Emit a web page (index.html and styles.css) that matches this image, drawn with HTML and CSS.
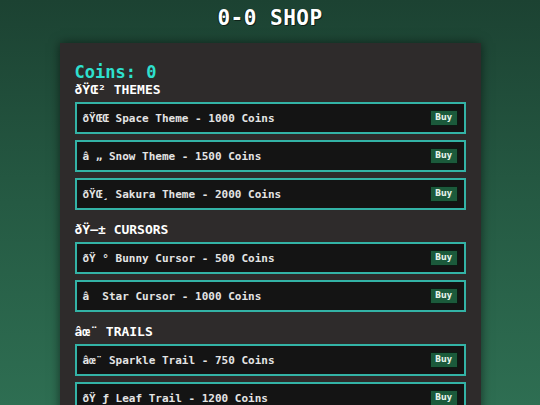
FILE: index.html
```html
<!DOCTYPE html>
<html>
<head>
<meta charset="utf-8">
<link rel="stylesheet" href="styles.css">
</head>
<body>
<h1 class="title">0-0 SHOP</h1>
<div class="panel">
  <div class="coins">Coins: 0</div>
  <h2 class="section">ðŸŒ² THEMES</h2>
  <div class="item"><span class="label">ðŸŒŒ Space Theme - 1000 Coins</span><button class="buy">Buy</button></div>
  <div class="item"><span class="label">â „ Snow Theme - 1500 Coins</span><button class="buy">Buy</button></div>
  <div class="item"><span class="label">ðŸŒ¸ Sakura Theme - 2000 Coins</span><button class="buy">Buy</button></div>
  <h2 class="section">ðŸ–± CURSORS</h2>
  <div class="item"><span class="label">ðŸ ° Bunny Cursor - 500 Coins</span><button class="buy">Buy</button></div>
  <div class="item"><span class="label">â  Star Cursor - 1000 Coins</span><button class="buy">Buy</button></div>
  <h2 class="section">âœ¨ TRAILS</h2>
  <div class="item"><span class="label">âœ¨ Sparkle Trail - 750 Coins</span><button class="buy">Buy</button></div>
  <div class="item"><span class="label">ðŸ ƒ Leaf Trail - 1200 Coins</span><button class="buy">Buy</button></div>
</div>
</body>
</html>
```
FILE: styles.css
```css
html, body {
  margin: 0;
  padding: 0;
  height: 100%;
  overflow: hidden;
}
body {
  background: linear-gradient(180deg, #1c4232 0%, #255a43 50%, #2e6e52 100%);
  font-family: "DejaVu Sans Mono", "Liberation Mono", monospace;
  color: #e6e6e6;
}
.title {
  margin: 0;
  padding-top: 6px;
  height: 37px;
  box-sizing: border-box;
  text-align: center;
  font-size: 21px;
  line-height: 24px;
  font-weight: bold;
  color: #ffffff;
  text-shadow: 1px 1px 0 #0e2219, -1px 0 0 #0e2219;
  letter-spacing: 0.5px;
}
.panel {
  width: 421px;
  margin: 6px auto 0;
  box-sizing: border-box;
  padding: 19px 15px 20px;
  background: #2e2b2b;
  box-shadow: 0 0 10px rgba(0, 0, 0, 0.55);
  display: flex;
  flex-direction: column;
}
.coins {
  font-size: 17px;
  line-height: 20px;
  font-weight: bold;
  color: #2ee0cf;
}
.section {
  margin: 6px 0 4px;
  font-size: 13px;
  line-height: 16px;
  font-weight: bold;
  color: #ffffff;
}
.coins + .section {
  margin-top: 0;
}
.item {
  height: 32px;
  box-sizing: border-box;
  margin-bottom: 6px;
  border: 2px solid #33b3a6;
  background: #141414;
  display: flex;
  align-items: center;
  justify-content: space-between;
  padding: 0 6px 0 6px;
}
.label {
  font-size: 11px;
  font-weight: bold;
  color: #e4e4e4;
  white-space: pre;
}
.buy {
  width: 28px;
  height: 16px;
  padding: 0;
  border: 1px solid #0c1a13;
  background: #1b5a3b;
  color: #e4f2ea;
  font-family: "DejaVu Sans", sans-serif;
  font-size: 8px;
  font-weight: bold;
  line-height: 14px;
}
```
